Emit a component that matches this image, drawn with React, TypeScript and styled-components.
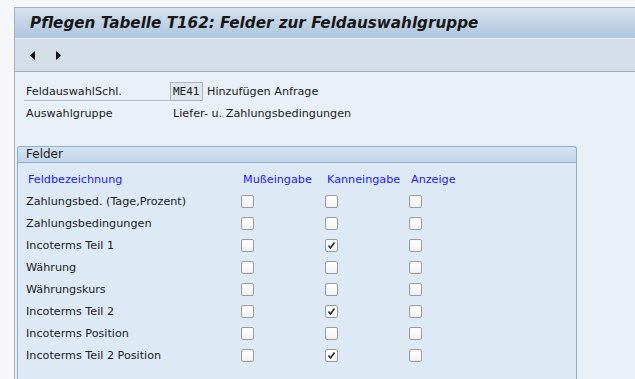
import React from "react";
import styled, { createGlobalStyle } from "styled-components";

const GlobalStyle = createGlobalStyle`
  html, body {
    margin: 0;
    padding: 0;
    background: #f5f7fb;
    overflow: hidden;
  }
  body {
    font-family: Tahoma, "DejaVu Sans", sans-serif;
    font-size: 11.2px;
    color: #1c1c1c;
  }
`;

type Row = { label: string; muss: boolean; kann: boolean; anzeige: boolean };

const rows: Row[] = [
  { label: "Zahlungsbed. (Tage,Prozent)", muss: false, kann: false, anzeige: false },
  { label: "Zahlungsbedingungen", muss: false, kann: false, anzeige: false },
  { label: "Incoterms Teil 1", muss: false, kann: true, anzeige: false },
  { label: "Währung", muss: false, kann: false, anzeige: false },
  { label: "Währungskurs", muss: false, kann: false, anzeige: false },
  { label: "Incoterms Teil 2", muss: false, kann: true, anzeige: false },
  { label: "Incoterms Position", muss: false, kann: false, anzeige: false },
  { label: "Incoterms Teil 2 Position", muss: false, kann: true, anzeige: false },
];

const Check = ({ on }: { on: boolean }) => (
  <Box>
    {on && (
      <svg width="9" height="9" viewBox="0 0 9 9">
        <path d="M1.5 4.5 L3.5 7 L7.5 1.5" fill="none" stroke="#2a2a2a" strokeWidth="1.6" />
      </svg>
    )}
  </Box>
);

const App = () => {
  return (
    <>
      <GlobalStyle />
      <Screen>
        <Frame>
          <TitleBar>Pflegen Tabelle T162: Felder zur Feldauswahlgruppe</TitleBar>
          <Toolbar>
            <Arrow>
              <svg width="6" height="9" viewBox="0 0 6 9">
                <path d="M5 0 L0 4.5 L5 9 Z" fill="#111" />
              </svg>
            </Arrow>
            <Arrow>
              <svg width="6" height="9" viewBox="0 0 6 9">
                <path d="M0 0 L5 4.5 L0 9 Z" fill="#111" />
              </svg>
            </Arrow>
          </Toolbar>
          <Content>
            <FormRow>
              <FieldLabel underline>FeldauswahlSchl.</FieldLabel>
              <KeyInput>ME41</KeyInput>
              <FieldText>Hinzufügen Anfrage</FieldText>
            </FormRow>
            <FormRow>
              <FieldLabel>Auswahlgruppe</FieldLabel>
              <FieldText indent>Liefer- u. Zahlungsbedingungen</FieldText>
            </FormRow>

            <Group>
              <GroupHeader>Felder</GroupHeader>
              <GroupBody>
                <Grid>
                  <HeadCell>Feldbezeichnung</HeadCell>
                  <HeadCell>Mußeingabe</HeadCell>
                  <HeadCell>Kanneingabe</HeadCell>
                  <HeadCell>Anzeige</HeadCell>
                  {rows.map((r) => (
                    <React.Fragment key={r.label}>
                      <Cell>{r.label}</Cell>
                      <Cell><Check on={r.muss} /></Cell>
                      <Cell><Check on={r.kann} /></Cell>
                      <Cell><Check on={r.anzeige} /></Cell>
                    </React.Fragment>
                  ))}
                </Grid>
              </GroupBody>
            </Group>
          </Content>
        </Frame>
      </Screen>
    </>
  );
};

export default App;

const Screen = styled.div`
  padding: 7px 0 0 14px;
  height: 379px;
  box-sizing: border-box;
`;

const Frame = styled.div`
  border-top: 1px solid #a3b4c6;
  border-left: 1px solid #a3b4c6;
  background: #e9f0f8;
  height: 100%;
  box-sizing: border-box;
`;

const TitleBar = styled.div`
  height: 30px;
  display: flex;
  align-items: center;
  padding-left: 15px;
  background: linear-gradient(#d6e2ef, #adc5dd);
  border-bottom: 1px solid #edf2f7;
  font-family: "DejaVu Sans", sans-serif;
  font-weight: bold;
  font-style: italic;
  font-size: 15.2px;
  color: #171717;
`;

const Toolbar = styled.div`
  height: 32px;
  display: flex;
  align-items: center;
  gap: 20px;
  padding-left: 15px;
  background: #d3dee9;
  border-bottom: 1px solid #9babbc;
`;

const Arrow = styled.div`
  display: flex;
  width: 6px;
`;

const Content = styled.div`
  padding: 8px 0 0 2px;
`;

const FormRow = styled.div`
  display: flex;
  align-items: center;
  height: 22px;
  padding-left: 7px;
`;

const FieldLabel = styled.div<{ underline?: boolean }>`
  width: 146px;
  height: 19px;
  line-height: 19px;
  padding-left: 2px;
  box-sizing: border-box;
  border-bottom: 1px solid ${(p) => (p.underline ? "#b3bcc6" : "transparent")};
`;

const KeyInput = styled.div`
  width: 33px;
  height: 19px;
  box-sizing: border-box;
  border: 1px solid #aab6c2;
  background: #dfe6ee;
  font-family: "DejaVu Sans Mono", monospace;
  font-size: 11px;
  line-height: 17px;
  padding-left: 2px;
  margin-right: 4px;
`;

const FieldText = styled.div<{ indent?: boolean }>`
  margin-left: ${(p) => (p.indent ? "3px" : "0")};
`;

const Group = styled.div`
  margin-top: 22px;
  width: 558px;
  border: 1px solid #8eaed0;
  border-bottom: none;
  border-radius: 3px 3px 0 0;
  background: #dde9f4;
`;

const GroupHeader = styled.div`
  height: 15px;
  line-height: 15px;
  padding-left: 8px;
  background: linear-gradient(#d3e2f1, #c2d6ea);
  border-bottom: 1px solid #8eaed0;
  border-radius: 3px 3px 0 0;
  font-size: 12px;
`;

const GroupBody = styled.div`
  padding: 5px 0 20px 8px;
`;

const Grid = styled.div`
  display: grid;
  grid-template-columns: 215px 84px 84px 84px;
  grid-auto-rows: 22px;
  align-items: center;
`;

const HeadCell = styled.div`
  color: #1a1aff;
  padding-left: 2px;
`;

const Cell = styled.div`
  display: flex;
  align-items: center;
`;

const Box = styled.div`
  width: 13px;
  height: 13px;
  box-sizing: border-box;
  border: 1px solid #9b9b9b;
  border-radius: 2px;
  background: linear-gradient(#ffffff, #f2f2f2);
  display: flex;
  align-items: center;
  justify-content: center;
`;
